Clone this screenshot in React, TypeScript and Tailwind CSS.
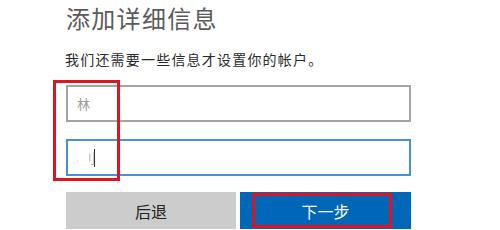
import React from "react";

export default function App() {
  return (
    <div
      className="relative w-[500px] h-[230px] overflow-hidden bg-white"
      style={{ fontFamily: '"Noto Sans CJK SC", "Noto Sans", sans-serif' }}
    >
      <div className="flex flex-col pl-[66px]">
        <div className="h-[36px] text-[24px] leading-[36px] tracking-[1.3px] text-[#5b5b5b]">
          添加详细信息
        </div>
        <div className="-ml-[1px] mt-[12px] h-[22px] text-[14px] leading-[22px] tracking-[1.2px] text-[#2a2a2a]">
          我们还需要一些信息才设置你的帐户。
        </div>
        <div className="mt-[15px] flex h-[37px] w-[345px] items-center border-2 border-[#a3a3a3] pl-[9px]">
          <span className="text-[13px] text-[#9a9a9a] tracking-[1px]">林</span>
        </div>
        <div className="mt-[17px] flex h-[37px] w-[345px] items-center border-2 border-[#4a90d6] pl-[8px]">
          <span className="text-[10px] text-[#c8c8c8]">.</span>
          <span className="ml-[4px] text-[13px] text-[#b0b0b0]">刂</span>
          <span className="-ml-[2px] h-[18px] w-[1.5px] bg-[#333]" />
        </div>
        <div className="mt-[16px] flex h-[37px] gap-[4px]">
          <div className="flex w-[170px] items-center justify-center bg-[#cccccc] text-[16px] text-[#222]">
            后退
          </div>
          <div className="flex w-[171px] items-center justify-center bg-[#0067b8] text-[16px] text-white">
            下一步
          </div>
        </div>
      </div>
      <div className="absolute left-[53px] top-[80px] h-[101px] w-[67px] border-[3px] border-[#e0141e]" />
      <div className="absolute left-[252px] top-[193px] h-[35px] w-[140px] border-[3px] border-[#e0141e]" />
    </div>
  );
}
